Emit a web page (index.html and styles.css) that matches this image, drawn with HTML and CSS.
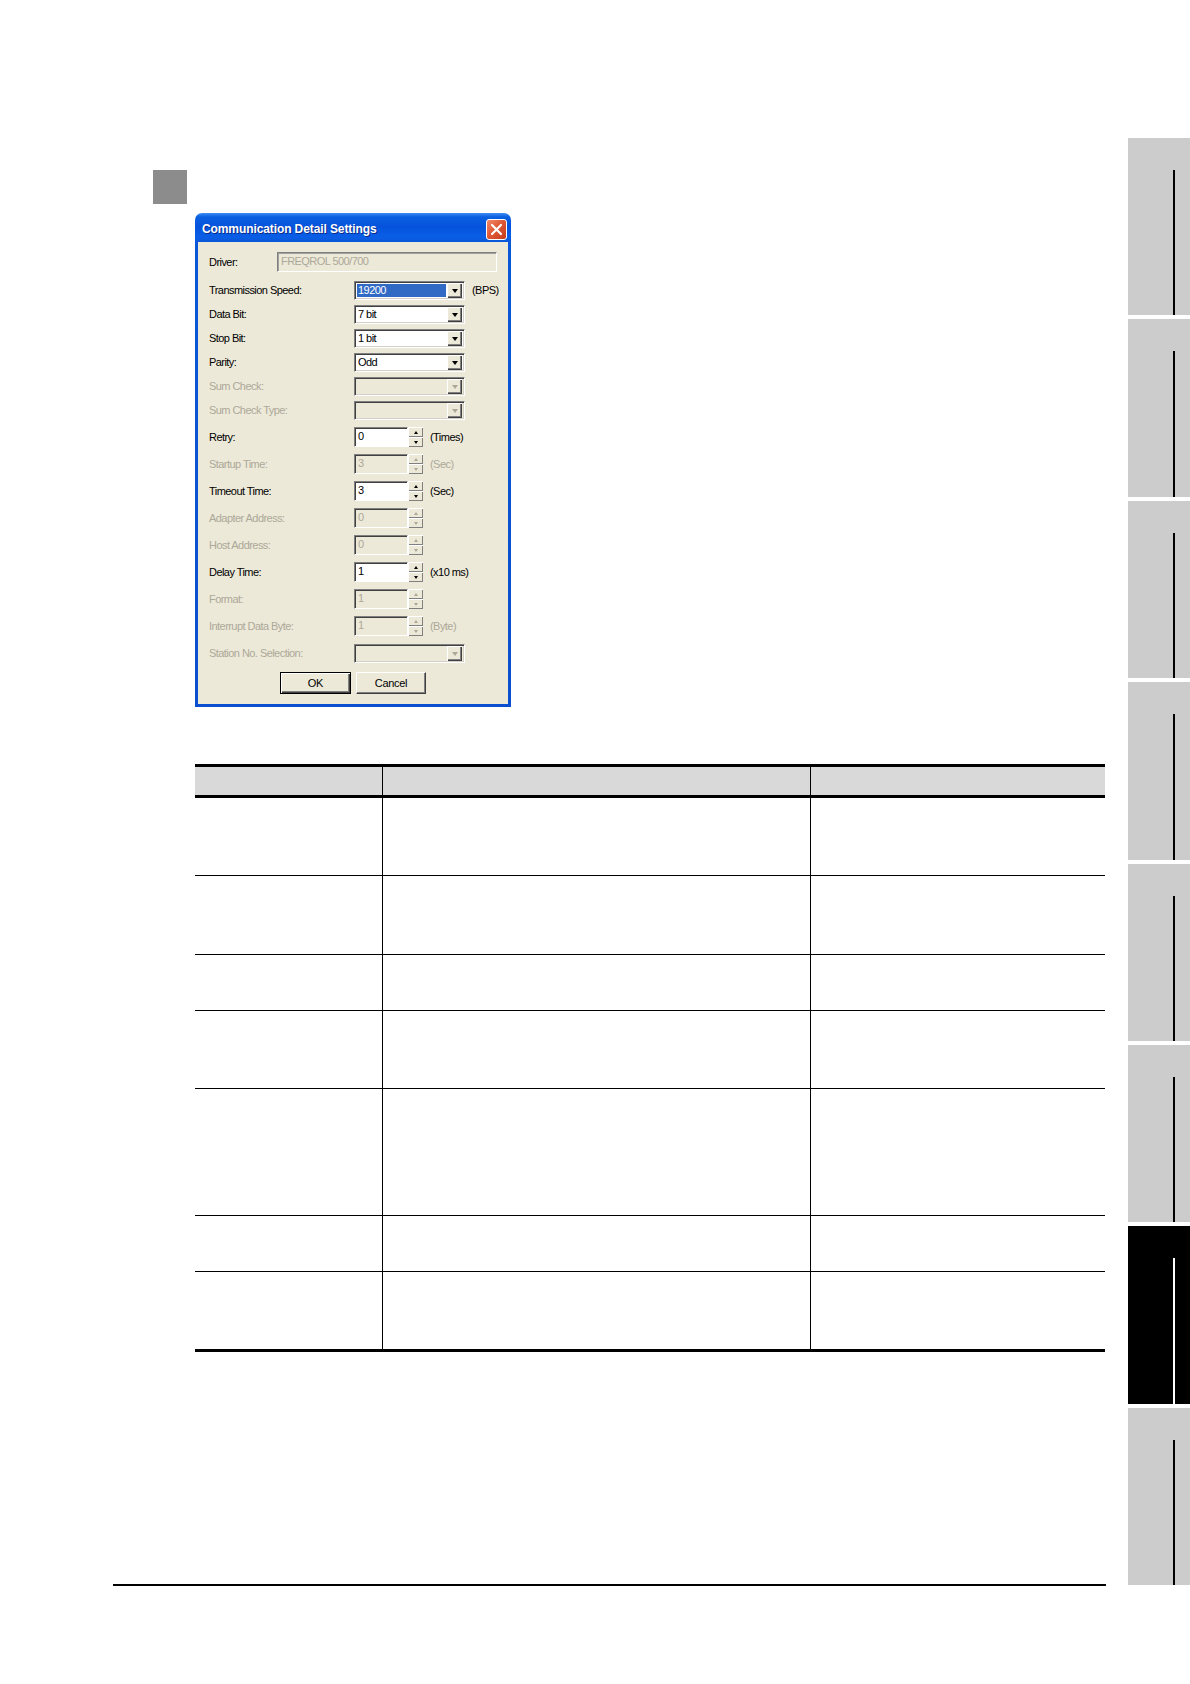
FILE: index.html
```html
<!DOCTYPE html>
<html>
<head>
<meta charset="utf-8">
<link rel="stylesheet" href="styles.css">
</head>
<body>
<div class="page">
  <main class="main">
    <div class="marker"></div>
    <div class="dialog">
      <div class="titlebar">
        <span class="title">Communication Detail Settings</span>
        <span class="close"><svg width="13" height="13" viewBox="0 0 13 13"><path d="M2 2 L11 11 M11 2 L2 11" stroke="#fff" stroke-width="2.2" stroke-linecap="round"/></svg></span>
      </div>
      <div class="body">
        <div class="row r-driver"><span class="lbl lbl-driver">Driver:</span><div class="field dis">FREQROL 500/700</div></div>

        <div class="row r-combo"><span class="lbl">Transmission Speed:</span><div class="combo"><span class="val sel">19200</span><span class="ddb"><i class="tri"></i></span></div><span class="unit unit-c">(BPS)</span></div>
        <div class="row r-combo"><span class="lbl">Data Bit:</span><div class="combo"><span class="val">7 bit</span><span class="ddb"><i class="tri"></i></span></div></div>
        <div class="row r-combo"><span class="lbl">Stop Bit:</span><div class="combo"><span class="val">1 bit</span><span class="ddb"><i class="tri"></i></span></div></div>
        <div class="row r-combo"><span class="lbl">Parity:</span><div class="combo"><span class="val">Odd</span><span class="ddb"><i class="tri"></i></span></div></div>
        <div class="row r-combo"><span class="lbl dis-t">Sum Check:</span><div class="combo dis"><span class="val"></span><span class="ddb"><i class="tri"></i></span></div></div>
        <div class="row r-combo r-last"><span class="lbl dis-t">Sum Check Type:</span><div class="combo dis"><span class="val"></span><span class="ddb"><i class="tri"></i></span></div></div>

        <div class="row r-spin"><span class="lbl">Retry:</span><div class="spin"><div class="sp-in">0</div><div class="sp-btns"><span><i class="su"></i></span><span><i class="sd"></i></span></div></div><span class="unit">(Times)</span></div>
        <div class="row r-spin"><span class="lbl dis-t">Startup Time:</span><div class="spin dis"><div class="sp-in">3</div><div class="sp-btns"><span><i class="su"></i></span><span><i class="sd"></i></span></div></div><span class="unit dis-t">(Sec)</span></div>
        <div class="row r-spin"><span class="lbl">Timeout Time:</span><div class="spin"><div class="sp-in">3</div><div class="sp-btns"><span><i class="su"></i></span><span><i class="sd"></i></span></div></div><span class="unit">(Sec)</span></div>
        <div class="row r-spin"><span class="lbl dis-t">Adapter Address:</span><div class="spin dis"><div class="sp-in">0</div><div class="sp-btns"><span><i class="su"></i></span><span><i class="sd"></i></span></div></div></div>
        <div class="row r-spin"><span class="lbl dis-t">Host Address:</span><div class="spin dis"><div class="sp-in">0</div><div class="sp-btns"><span><i class="su"></i></span><span><i class="sd"></i></span></div></div></div>
        <div class="row r-spin"><span class="lbl">Delay Time:</span><div class="spin"><div class="sp-in">1</div><div class="sp-btns"><span><i class="su"></i></span><span><i class="sd"></i></span></div></div><span class="unit">(x10 ms)</span></div>
        <div class="row r-spin"><span class="lbl dis-t">Format:</span><div class="spin dis"><div class="sp-in">1</div><div class="sp-btns"><span><i class="su"></i></span><span><i class="sd"></i></span></div></div></div>
        <div class="row r-spin r-last"><span class="lbl dis-t">Interrupt Data Byte:</span><div class="spin dis"><div class="sp-in">1</div><div class="sp-btns"><span><i class="su"></i></span><span><i class="sd"></i></span></div></div><span class="unit dis-t">(Byte)</span></div>

        <div class="row r-station"><span class="lbl dis-t">Station No. Selection:</span><div class="combo dis"><span class="val"></span><span class="ddb"><i class="tri"></i></span></div></div>

        <div class="buttons">
          <span class="btn btn-default">OK</span>
          <span class="btn">Cancel</span>
        </div>
      </div>
    </div>

    <div class="tbl">
      <div class="tr th"><div class="td"></div><div class="td"></div><div class="td"></div></div>
      <div class="tr h78"><div class="td"></div><div class="td"></div><div class="td"></div></div>
      <div class="tr h79"><div class="td"></div><div class="td"></div><div class="td"></div></div>
      <div class="tr h56"><div class="td"></div><div class="td"></div><div class="td"></div></div>
      <div class="tr h78"><div class="td"></div><div class="td"></div><div class="td"></div></div>
      <div class="tr h127"><div class="td"></div><div class="td"></div><div class="td"></div></div>
      <div class="tr h56"><div class="td"></div><div class="td"></div><div class="td"></div></div>
      <div class="tr h77 last"><div class="td"></div><div class="td"></div><div class="td"></div></div>
    </div>

    <div class="footer-line"></div>
  </main>

  <aside class="tabs">
    <div class="tab"><div class="tab-line"></div></div>
    <div class="tab"><div class="tab-line"></div></div>
    <div class="tab"><div class="tab-line"></div></div>
    <div class="tab"><div class="tab-line"></div></div>
    <div class="tab"><div class="tab-line"></div></div>
    <div class="tab"><div class="tab-line"></div></div>
    <div class="tab active"><div class="tab-line"></div></div>
    <div class="tab"><div class="tab-line"></div></div>
  </aside>
</div>
</body>
</html>
```

FILE: styles.css
```css
html, body {
  margin: 0;
  padding: 0;
  background: #fff;
}

.page {
  width: 1190px;
  height: 1684px;
  display: grid;
  grid-template-columns: 1128px 62px;
  font-family: "Liberation Sans", Arial, sans-serif;
}

.main {
  display: flex;
  flex-direction: column;
  align-items: flex-start;
  padding-top: 170px;
  padding-bottom: 98px;
  box-sizing: border-box;
  height: 1684px;
}

.marker {
  width: 34px;
  height: 34px;
  margin-left: 153px;
  background: #8c8c8c;
}

/* ---------- dialog ---------- */
.dialog {
  margin-top: 9px;
  margin-left: 195px;
  width: 316px;
  height: 494px;
  box-sizing: border-box;
  display: flex;
  flex-direction: column;
  border-radius: 7px 7px 0 0;
  background: linear-gradient(180deg, #3d8df5 0px, #0a5fe0 4px, #0553dc 14px, #0a5ee6 24px, #0a57d8 29px, #0a4fcf 100%);
  overflow: hidden;
}

.titlebar {
  height: 29px;
  box-sizing: border-box;
  display: flex;
  align-items: flex-start;
  justify-content: space-between;
  padding: 6px 4px 0 7px;
}

.title {
  color: #fff;
  font-weight: bold;
  font-size: 12px;
  letter-spacing: -0.1px;
  line-height: 18px;
  margin-top: 1px;
  text-shadow: 1px 1px 0 #0a2a8a;
}

.close {
  width: 21px;
  height: 21px;
  box-sizing: border-box;
  border: 1px solid #fff;
  border-radius: 3px;
  background: linear-gradient(135deg, #f08a6c 0%, #e05a36 45%, #c63c1c 100%);
  display: flex;
  align-items: center;
  justify-content: center;
}

.body {
  flex: 1;
  margin: 0 3px 3px;
  background: #ece9d8;
  padding: 10px 0 0 11px;
  font-size: 11px;
  letter-spacing: -0.55px;
  color: #000;
}

.row {
  display: flex;
  align-items: flex-start;
}

.r-driver { height: 29px; }
.r-combo { height: 24px; }
.r-combo.r-last { height: 26px; }
.r-spin { height: 27px; }
.r-spin.r-last { height: 28px; }
.r-station { height: 28px; }

.lbl {
  width: 145px;
  flex: none;
  line-height: 20px;
  white-space: nowrap;
}

.r-combo .lbl, .r-station .lbl { line-height: 19px; }

.lbl-driver {
  width: 68px;
}

.dis-t { color: #aca899; }

.field {
  width: 220px;
  height: 20px;
  box-sizing: border-box;
  border: 1px solid;
  border-color: #808080 #fff #fff #808080;
  box-shadow: inset 1px 1px 0 #a0a0a0;
  padding-left: 3px;
  line-height: 17px;
  color: #aca899;
  background: #ece9d8;
}

/* combo box */
.combo {
  width: 111px;
  height: 19px;
  box-sizing: border-box;
  display: flex;
  align-items: center;
  background: #fff;
  border: 1px solid;
  border-color: #808080 #fff #fff #808080;
  box-shadow: inset 1px 1px 0 #404040, inset -1px -1px 0 #d4d0c8;
  padding: 0 2px 0 2px;
}

.combo .val {
  flex: 1;
  height: 13px;
  line-height: 13px;
  padding-left: 1px;
  margin-right: 1px;
  white-space: nowrap;
}

.combo .val.sel {
  background: #316ac5;
  color: #fff;
}

.ddb {
  width: 15px;
  height: 15px;
  flex: none;
  box-sizing: border-box;
  background: #ece9d8;
  box-shadow: inset 1px 1px 0 #fff, inset -1px -1px 0 #404040, inset -2px -2px 0 #808080;
  display: flex;
  align-items: center;
  justify-content: center;
}

.tri {
  width: 0;
  height: 0;
  border-left: 3.5px solid transparent;
  border-right: 3.5px solid transparent;
  border-top: 4px solid #000;
  margin-top: 1px;
}

.combo.dis { background: #ece9d8; }
.combo.dis .tri { border-top-color: #aca899; }

/* spin control */
.spin {
  display: flex;
  height: 20px;
  width: 69px;
  flex: none;
}

.sp-in {
  width: 54px;
  box-sizing: border-box;
  border: 1px solid;
  border-color: #808080 #fff #fff #808080;
  box-shadow: inset 1px 1px 0 #404040;
  background: #fff;
  padding-left: 3px;
  line-height: 16px;
}

.sp-btns {
  width: 15px;
  display: flex;
  flex-direction: column;
  gap: 0;
}

.sp-btns span {
  flex: 1;
  background: #ece9d8;
  box-shadow: inset 1px 1px 0 #fff, inset -1px -1px 0 #808080;
  display: flex;
  align-items: center;
  justify-content: center;
}

.su {
  width: 0;
  height: 0;
  border-left: 2.5px solid transparent;
  border-right: 2.5px solid transparent;
  border-bottom: 3px solid #000;
}

.sd {
  width: 0;
  height: 0;
  border-left: 2.5px solid transparent;
  border-right: 2.5px solid transparent;
  border-top: 3px solid #000;
}

.spin.dis .sp-in { background: #ece9d8; color: #aca899; }
.spin.dis .su { border-bottom-color: #aca899; }
.spin.dis .sd { border-top-color: #aca899; }

.unit {
  margin-left: 7px;
  line-height: 20px;
  white-space: nowrap;
}

.unit-c { line-height: 19px; }

/* buttons */
.buttons {
  display: flex;
  justify-content: center;
  gap: 5px;
  margin-left: -11px;
}

.btn {
  width: 70px;
  height: 22px;
  box-sizing: border-box;
  display: flex;
  align-items: center;
  justify-content: center;
  background: #ece9d8;
  border: 1px solid;
  border-color: #fff #404040 #404040 #fff;
  box-shadow: inset -1px -1px 0 #808080;
  letter-spacing: -0.3px;
}

.btn-default {
  width: 71px;
  border-color: #000;
  box-shadow: inset 1px 1px 0 #fff, inset -1px -1px 0 #404040, inset -2px -2px 0 #808080;
}

/* ---------- table ---------- */
.tbl {
  margin-top: 57px;
  margin-left: 195px;
  width: 910px;
}

.tr {
  display: grid;
  grid-template-columns: 187px 428px 1fr;
  border-bottom: 1px solid #000;
  box-sizing: border-box;
}

.tr .td + .td {
  border-left: 1px solid #000;
}

.th {
  height: 34px;
  border-top: 3px solid #000;
  border-bottom: 3px solid #000;
  background: #d9d9d9;
}

.h78 { height: 78px; }
.h79 { height: 79px; }
.h56 { height: 56px; }
.h127 { height: 127px; }
.h77 { height: 80px; }
.tr.last { border-bottom: 3px solid #000; }

.footer-line {
  margin-top: auto;
  margin-left: 113px;
  width: 993px;
  height: 2px;
  background: #000;
}

/* ---------- side tabs ---------- */
.tabs {
  padding-top: 138px;
  display: flex;
  flex-direction: column;
  gap: 4px;
}

.tab {
  height: 177.4px;
  box-sizing: border-box;
  background: #cccccc;
  padding: 32px 0 0 45px;
}

.tab-line {
  width: 2px;
  height: 100%;
  background: #000;
}

.tab.active { background: #000; }
.tab.active .tab-line { background: #fff; }
```
